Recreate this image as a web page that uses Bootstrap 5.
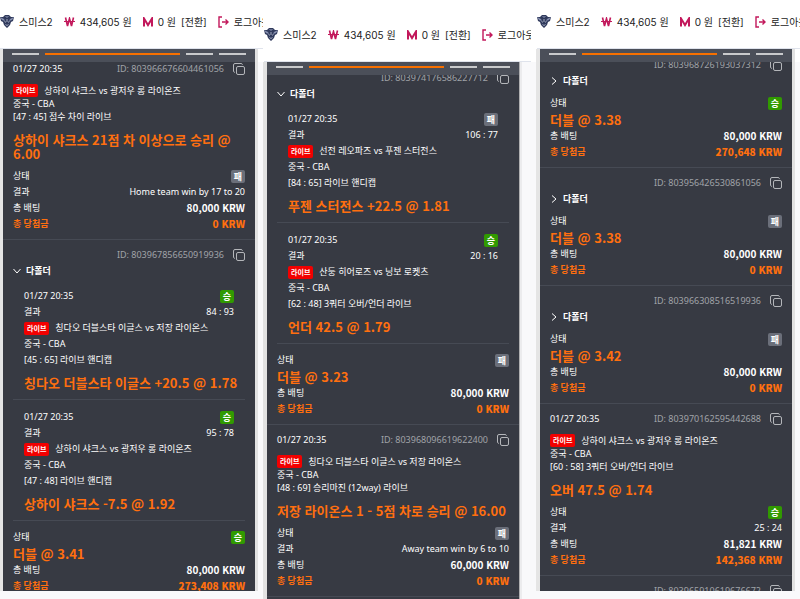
<!DOCTYPE html>
<html lang="ko">
<head>
<meta charset="utf-8">
<meta name="viewport" content="width=device-width, initial-scale=1">
<title>베팅 내역</title>
<link href="https://cdn.jsdelivr.net/npm/bootstrap@5.3.0/dist/css/bootstrap.min.css" rel="stylesheet">
<style>
body{font-family:"Noto Sans","Noto Sans CJK KR",sans-serif;font-size:9px;line-height:16px;background:#fff;color:#fff}
.board{display:grid;grid-template-columns:263fr 268fr 269fr;grid-template-rows:minmax(0,1fr)}
.lane{background:linear-gradient(#fff,#fff) 0 0/100% 62px no-repeat,#f9f9fb}
.lane-a{padding:0 8px 8px 3px}
.lane-b{padding:13px 12px 0 4px}
.lane-c{padding:0 8px 8px 9px}
.topbar{height:49px;margin:0 -12px 0 -3px;padding-bottom:5px;border-bottom:1px solid #dfe3ec;font-family:Inter,"Noto Sans CJK KR",sans-serif;font-size:10px;color:#222;white-space:nowrap;gap:11px}
.topbar svg{flex-shrink:0}
.topbar a{color:inherit;text-decoration:none}
.pair{display:flex;align-items:center;gap:5px}
.slip{background:#373a43;box-shadow:3px 0 #e2e2e2,-4px 0 #e5e5e5}
.lane-b .slip{box-shadow:1px 0 #b0b0b2,3px 0 #ececee,-4px 0 #e2e2e2}
.tabs{height:13px;padding:4px 9px 0;background:#4b4f59;gap:6px}
.tabs i{height:2px;flex:27;background:#c9cacc}
.tabs .on{flex:134;background:#f77000}
.shift-a{margin-top:-9px}.shift-b{margin-top:-13px}.shift-c{margin-top:-13px}
.bet{border-top:1px solid #464a54;padding:7px 10px 7px}
.id{color:#a0a3a8}
.ico{width:12px;height:12px;color:#b4b6ba}
.copy{border:0;background:none;padding:0;margin-left:9px;line-height:0}
.fold{border:0;background:none;padding:0;color:#fff;font-weight:700;gap:5px}
.fold .ico{width:8px;height:8px;color:#fff}
.leg{padding:9px 11px 9px;border-bottom:1px solid #464a54}
.legs{margin-bottom:8px}
.live{background:#f20000;font-size:7px;font-weight:700;line-height:13px;padding:0 3px;border-radius:2px;margin-right:6px}
.res{width:14px;height:13px;line-height:13px;border-radius:2px;font-size:9px;font-weight:700;text-align:center}
.win{background:#319a00}.lose{background:#6b6f7a}
.pick{font-family:"Noto Sans CJK KR",sans-serif;font-size:13px;line-height:14px;font-weight:700;color:#ff6f0f}
.leg .pick{margin:8px -11px 0 0}
.single{line-height:13px;margin-top:7px}
.single .pick{margin:10px 0 7px}
.total{line-height:17px}
.pay{font-weight:700;color:#ff6f0f}
.bet b{font-family:"Noto Sans CJK KR",sans-serif;font-size:10px}
.mt-fold{margin-top:6px}
</style>
<script src="https://cdn.jsdelivr.net/npm/bootstrap@5.3.0/dist/js/bootstrap.bundle.min.js"></script>
</head>
<body>
<svg class="d-none">
<symbol id="crest" viewBox="0 0 14 13"><path d="M0 2l3 0 2-2h4l2 2 3 0-1 4-2 1-1 3-3 3-3-3-1-3-2-1z" fill="#303a5c"/><path d="M0 2l4 2 1 2-3-1zM14 2l-4 2-1 2 3-1zM5 1l2 2 2-2-1 0-1 .7-1-.7z" fill="#8791b0"/><path d="M4.500 6.500l1.500.8M9.500 6.500L8 7.300M5.500 9.500l1.500 1 1.500-1M7 4v3" stroke="#c3c9da" stroke-width=".8" fill="none"/></symbol>
<symbol id="copy" viewBox="0 0 12 12"><path d="M3.500 5a1.500 1.500 0 0 1 1.500-1.500h5a1.500 1.500 0 0 1 1.500 1.500v5a1.500 1.500 0 0 1-1.500 1.500H5A1.500 1.500 0 0 1 3.500 10zM1.800 9.500Q.5 9 .5 8V2Q.5.5 2 .5h6q1.200 0 1.500 1.200" fill="none" stroke="currentColor"/></symbol>
<symbol id="down" viewBox="0 0 8 8"><path d="M.5 2L4 6l3.500-4" fill="none" stroke="currentColor"/></symbol>
<symbol id="right" viewBox="0 0 8 8"><path d="M2 .5L6 4 2 7.500" fill="none" stroke="currentColor"/></symbol>
<symbol id="won" viewBox="0 0 11 10"><path d="M1.500 0.500L3.500 9 5.500 1.500 7.500 9 9.500 .5" fill="none" stroke="#c2185b" stroke-width="1.600"/><path d="M0 4.500h11" fill="none" stroke="#c2185b"/></symbol>
<symbol id="em" viewBox="0 0 10 10"><path d="M1 9.500V1.500L5 8 9 1.500V9.500" fill="none" stroke="#c2185b" stroke-width="2"/></symbol>
<symbol id="out" viewBox="0 0 11 12"><path d="M4 1H1v10h3M4 6h6M7.500 3.500L10 6 7.500 8.500" fill="none" stroke="#c2185b" stroke-width="1.400"/></symbol>
</svg>
<main class="board vh-100 overflow-hidden">

<section class="lane lane-a d-flex flex-column overflow-hidden">
<header class="topbar d-flex align-items-center flex-shrink-0"><span class="pair"><svg width="14" height="13"><use href="#crest"/></svg>스미스2</span><span class="pair"><svg width="11" height="10"><use href="#won"/></svg>434,605 원</span><span class="pair"><svg width="10" height="10"><use href="#em"/></svg>0 원 <a href="#">[전환]</a></span><a href="#" class="pair"><svg width="11" height="12"><use href="#out"/></svg>로그아웃</a></header>
<div class="slip flex-grow-1 d-flex flex-column overflow-hidden">
<div class="tabs d-flex flex-shrink-0"><i></i><i class="on"></i><i></i><i></i></div>
<div class="overflow-hidden flex-grow-1">
<article class="bet shift-a">
<div class="d-flex align-items-center"><span class="me-auto">01/27 20:35</span><span class="id">ID: 803966676604461056</span><button class="copy" aria-label="복사"><svg class="ico"><use href="#copy"/></svg></button></div>
<div class="single"><div class="d-flex align-items-center"><span class="live">라이브</span>상하이 샤크스 vs 광저우 롱 라이온즈</div><div>중국 - CBA</div><div>[47 : 45] 점수 차이 라이브</div><div class="pick">상하이 샤크스 21점 차 이상으로 승리 @ 6.00</div></div>
<div class="d-flex justify-content-between align-items-center"><span>상태</span><span class="res lose">패</span></div>
<div class="d-flex justify-content-between"><span>결과</span><span>Home team win by 17 to 20</span></div>
<div class="d-flex justify-content-between"><span>총 배팅</span><b>80,000 KRW</b></div>
<div class="d-flex justify-content-between pay"><span>총 당첨금</span><b>0 KRW</b></div>
</article>
<article class="bet">
<div class="d-flex align-items-center justify-content-end"><span class="id">ID: 803967856650919936</span><button class="copy" aria-label="복사"><svg class="ico"><use href="#copy"/></svg></button></div>
<button class="fold d-flex align-items-center"><svg class="ico"><use href="#down"/></svg>다폴더</button>
<div class="legs">
<div class="leg"><div class="d-flex justify-content-between align-items-center"><span>01/27 20:35</span><span class="res win">승</span></div><div class="d-flex justify-content-between"><span>결과</span><span>84 : 93</span></div><div class="d-flex align-items-center"><span class="live">라이브</span>칭다오 더블스타 이글스 vs 저장 라이온스</div><div>중국 - CBA</div><div>[45 : 65] 라이브 핸디캡</div><div class="pick">칭다오 더블스타 이글스 +20.5 @ 1.78</div></div>
<div class="leg"><div class="d-flex justify-content-between align-items-center"><span>01/27 20:35</span><span class="res win">승</span></div><div class="d-flex justify-content-between"><span>결과</span><span>95 : 78</span></div><div class="d-flex align-items-center"><span class="live">라이브</span>상하이 샤크스 vs 광저우 롱 라이온즈</div><div>중국 - CBA</div><div>[47 : 48] 라이브 핸디캡</div><div class="pick">상하이 샤크스 -7.5 @ 1.92</div></div>
</div>
<div class="d-flex justify-content-between align-items-center"><span>상태</span><span class="res win">승</span></div>
<div class="pick total">더블 @ 3.41</div>
<div class="d-flex justify-content-between"><span>총 배팅</span><b>80,000 KRW</b></div>
<div class="d-flex justify-content-between pay"><span>총 당첨금</span><b>273,408 KRW</b></div>
</article>
</div></div>
</section>

<section class="lane lane-b d-flex flex-column overflow-hidden">
<header class="topbar d-flex align-items-center flex-shrink-0"><span class="pair"><svg width="14" height="13"><use href="#crest"/></svg>스미스2</span><span class="pair"><svg width="11" height="10"><use href="#won"/></svg>434,605 원</span><span class="pair"><svg width="10" height="10"><use href="#em"/></svg>0 원 <a href="#">[전환]</a></span><a href="#" class="pair"><svg width="11" height="12"><use href="#out"/></svg>로그아웃</a></header>
<div class="slip flex-grow-1 d-flex flex-column overflow-hidden">
<div class="tabs d-flex flex-shrink-0"><i></i><i class="on"></i><i></i><i></i></div>
<div class="overflow-hidden flex-grow-1">
<article class="bet shift-b">
<div class="d-flex align-items-center justify-content-end"><span class="id">ID: 803974176586227712</span><button class="copy" aria-label="복사"><svg class="ico"><use href="#copy"/></svg></button></div>
<button class="fold d-flex align-items-center"><svg class="ico"><use href="#down"/></svg>다폴더</button>
<div class="legs">
<div class="leg"><div class="d-flex justify-content-between align-items-center"><span>01/27 20:35</span><span class="res lose">패</span></div><div class="d-flex justify-content-between"><span>결과</span><span>106 : 77</span></div><div class="d-flex align-items-center"><span class="live">라이브</span>선전 레오파즈 vs 푸젠 스터전스</div><div>중국 - CBA</div><div>[84 : 65] 라이브 핸디캡</div><div class="pick">푸젠 스터전스 +22.5 @ 1.81</div></div>
<div class="leg"><div class="d-flex justify-content-between align-items-center"><span>01/27 20:35</span><span class="res win">승</span></div><div class="d-flex justify-content-between"><span>결과</span><span>20 : 16</span></div><div class="d-flex align-items-center"><span class="live">라이브</span>산둥 히어로즈 vs 닝보 로켓츠</div><div>중국 - CBA</div><div>[62 : 48] 3쿼터 오버/언더 라이브</div><div class="pick">언더 42.5 @ 1.79</div></div>
</div>
<div class="d-flex justify-content-between align-items-center"><span>상태</span><span class="res lose">패</span></div>
<div class="pick total">더블 @ 3.23</div>
<div class="d-flex justify-content-between"><span>총 배팅</span><b>80,000 KRW</b></div>
<div class="d-flex justify-content-between pay"><span>총 당첨금</span><b>0 KRW</b></div>
</article>
<article class="bet">
<div class="d-flex align-items-center"><span class="me-auto">01/27 20:35</span><span class="id">ID: 803968096619622400</span><button class="copy" aria-label="복사"><svg class="ico"><use href="#copy"/></svg></button></div>
<div class="single"><div class="d-flex align-items-center"><span class="live">라이브</span>칭다오 더블스타 이글스 vs 저장 라이온스</div><div>중국 - CBA</div><div>[48 : 69] 승리마진 (12way) 라이브</div><div class="pick">저장 라이온스 1 - 5점 차로 승리 @ 16.00</div></div>
<div class="d-flex justify-content-between align-items-center"><span>상태</span><span class="res lose">패</span></div>
<div class="d-flex justify-content-between"><span>결과</span><span>Away team win by 6 to 10</span></div>
<div class="d-flex justify-content-between"><span>총 배팅</span><b>60,000 KRW</b></div>
<div class="d-flex justify-content-between pay"><span>총 당첨금</span><b>0 KRW</b></div>
</article>
<div class="bet"></div>
</div></div>
</section>

<section class="lane lane-c d-flex flex-column overflow-hidden">
<header class="topbar d-flex align-items-center flex-shrink-0"><span class="pair"><svg width="14" height="13"><use href="#crest"/></svg>스미스2</span><span class="pair"><svg width="11" height="10"><use href="#won"/></svg>434,605 원</span><span class="pair"><svg width="10" height="10"><use href="#em"/></svg>0 원 <a href="#">[전환]</a></span><a href="#" class="pair"><svg width="11" height="12"><use href="#out"/></svg>로그아웃</a></header>
<div class="slip flex-grow-1 d-flex flex-column overflow-hidden">
<div class="tabs d-flex flex-shrink-0"><i></i><i class="on"></i><i></i><i></i></div>
<div class="overflow-hidden flex-grow-1">
<article class="bet shift-c">
<div class="d-flex align-items-center justify-content-end"><span class="id">ID: 803968726193037312</span><button class="copy" aria-label="복사"><svg class="ico"><use href="#copy"/></svg></button></div>
<button class="fold d-flex align-items-center"><svg class="ico"><use href="#right"/></svg>다폴더</button>
<div class="d-flex justify-content-between align-items-center mt-fold"><span>상태</span><span class="res win">승</span></div>
<div class="pick total">더블 @ 3.38</div>
<div class="d-flex justify-content-between"><span>총 배팅</span><b>80,000 KRW</b></div>
<div class="d-flex justify-content-between pay"><span>총 당첨금</span><b>270,648 KRW</b></div>
</article>
<article class="bet">
<div class="d-flex align-items-center justify-content-end"><span class="id">ID: 803956426530861056</span><button class="copy" aria-label="복사"><svg class="ico"><use href="#copy"/></svg></button></div>
<button class="fold d-flex align-items-center"><svg class="ico"><use href="#right"/></svg>다폴더</button>
<div class="d-flex justify-content-between align-items-center mt-fold"><span>상태</span><span class="res lose">패</span></div>
<div class="pick total">더블 @ 3.38</div>
<div class="d-flex justify-content-between"><span>총 배팅</span><b>80,000 KRW</b></div>
<div class="d-flex justify-content-between pay"><span>총 당첨금</span><b>0 KRW</b></div>
</article>
<article class="bet">
<div class="d-flex align-items-center justify-content-end"><span class="id">ID: 803966308516519936</span><button class="copy" aria-label="복사"><svg class="ico"><use href="#copy"/></svg></button></div>
<button class="fold d-flex align-items-center"><svg class="ico"><use href="#right"/></svg>다폴더</button>
<div class="d-flex justify-content-between align-items-center mt-fold"><span>상태</span><span class="res lose">패</span></div>
<div class="pick total">더블 @ 3.42</div>
<div class="d-flex justify-content-between"><span>총 배팅</span><b>80,000 KRW</b></div>
<div class="d-flex justify-content-between pay"><span>총 당첨금</span><b>0 KRW</b></div>
</article>
<article class="bet">
<div class="d-flex align-items-center"><span class="me-auto">01/27 20:35</span><span class="id">ID: 803970162595442688</span><button class="copy" aria-label="복사"><svg class="ico"><use href="#copy"/></svg></button></div>
<div class="single"><div class="d-flex align-items-center"><span class="live">라이브</span>상하이 샤크스 vs 광저우 롱 라이온즈</div><div>중국 - CBA</div><div>[60 : 58] 3쿼터 오버/언더 라이브</div><div class="pick">오버 47.5 @ 1.74</div></div>
<div class="d-flex justify-content-between align-items-center"><span>상태</span><span class="res win">승</span></div>
<div class="d-flex justify-content-between"><span>결과</span><span>25 : 24</span></div>
<div class="d-flex justify-content-between"><span>총 배팅</span><b>81,821 KRW</b></div>
<div class="d-flex justify-content-between pay"><span>총 당첨금</span><b>142,368 KRW</b></div>
</article>
<article class="bet">
<div class="d-flex align-items-center justify-content-end"><span class="id">ID: 803965910619676672</span><button class="copy" aria-label="복사"><svg class="ico"><use href="#copy"/></svg></button></div>
</article>
</div></div>
</section>
</main>
</body>
</html>
